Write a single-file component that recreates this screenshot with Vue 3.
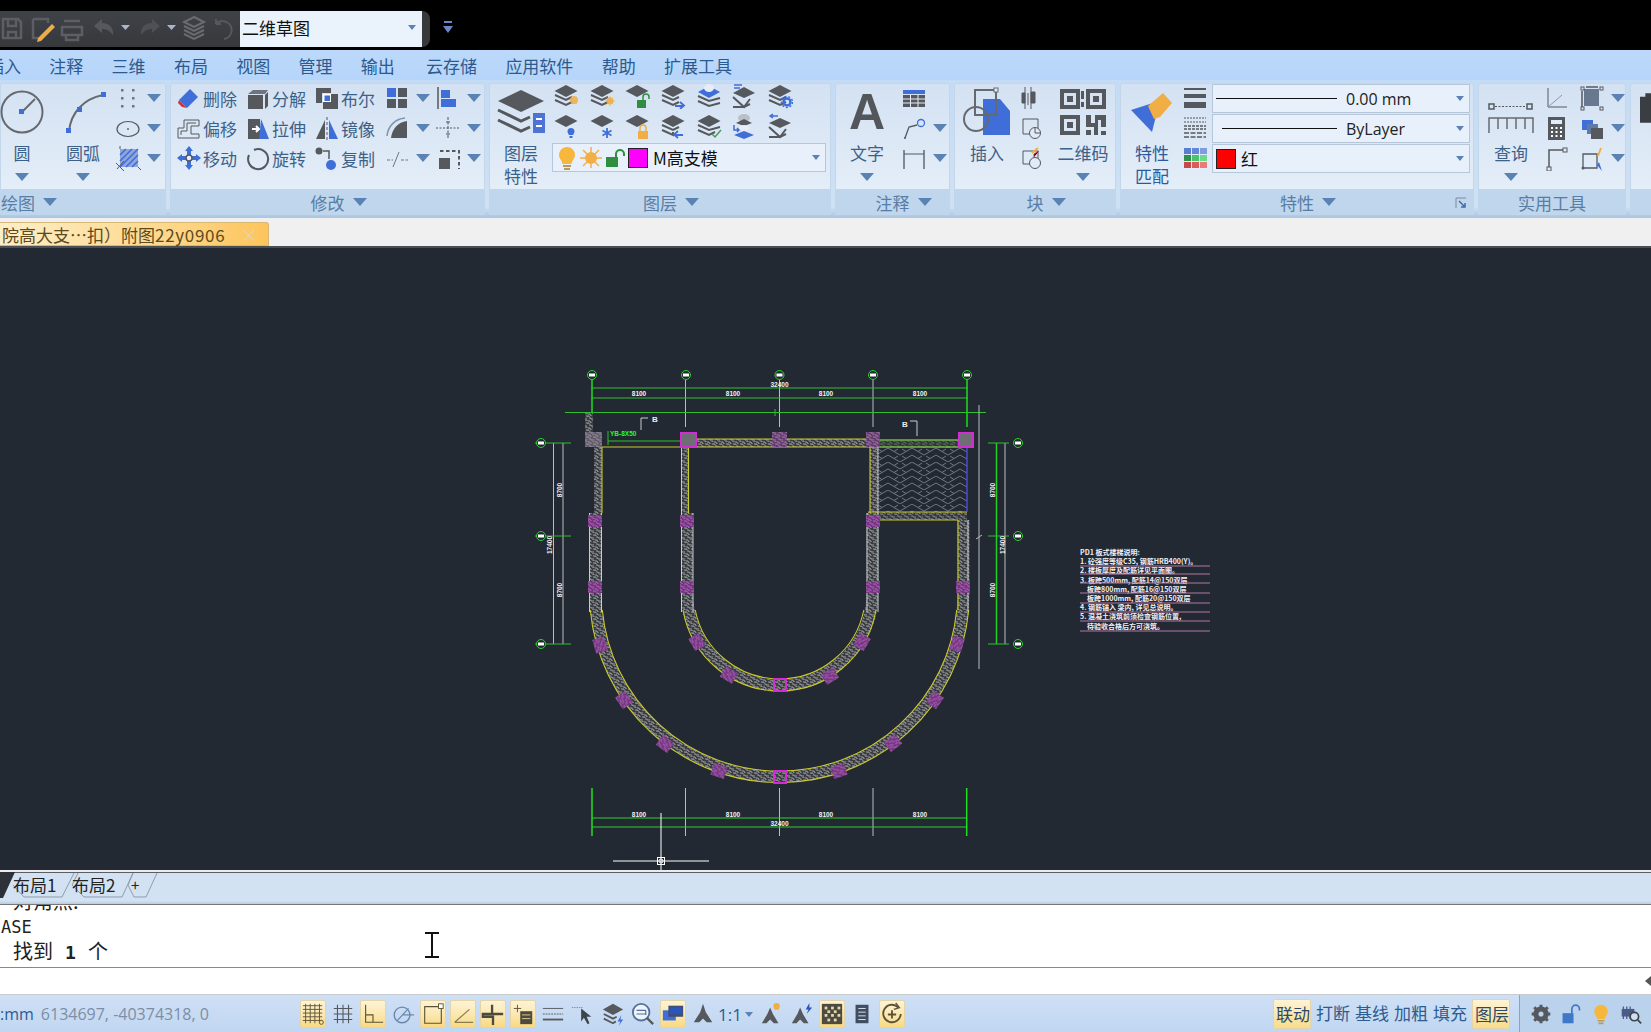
<script setup>
const G = '#55595e'
const B = '#3f6ed8'
const O = '#f0ae45'
const N = '#2f8f3f'

const diamond = `<path d="M13 2 24.500 8 13 14 1.500 8Z" fill="${G}"/>`
const chev = (y, c = G) => `<path d="M2 ${y} 13 ${y + 5} 19 ${y + 2}" fill="none" stroke="${c}" stroke-width="2"/>`
const stack = diamond + chev(12) + chev(17)

const icons = {
  erase: `<path d="M3 15 14 4 22 12 11 23Z" fill="${B}"/><path d="M3 15 9 21 11 23 6 22 2 18Z" fill="#c8373c"/>`,
  explode: `<path d="M3 9 8 5H23L20 9Z" fill="${G}" opacity=".8"/><path d="M3 10H18V24H3Z" fill="${G}"/><path d="M20 10 23 7V21L20 24Z" fill="${G}"/>`,
  boolean: `<path d="M2 3H17V8H8V18H2Z" fill="${G}"/><path d="M9 9H24V24H9Z" fill="${G}"/><path d="M9 9H17V17H9Z" fill="#fff"/><path d="M10.500 10.500H16V16H10.500Z" fill="${B}"/>`,
  offset: `<path d="M2 23V13H8V5H23V11H15V19H23V23Z" fill="none" stroke="${G}" stroke-width="1"/><path d="M5 20V16H11V8H20" fill="none" stroke="${G}" stroke-width="1"/>`,
  stretch: `<path d="M3 4H15V24H3Z" fill="${G}"/><path d="M16 4 24 24H14Z" fill="${B}"/><path d="M7 14H13M11 11 14 14 11 17" fill="none" stroke="#fff" stroke-width="2"/>`,
  mirror: `<path d="M11 5V24H2Z" fill="${G}"/><path d="M15 5V24H24Z" fill="${B}"/><path d="M13 2V26" stroke="${G}" stroke-dasharray="3 2"/>`,
  move: `<path d="M13 1 17 6H15V11H20V9L25 13 20 17V15H15V20H17L13 25 9 20H11V15H6V17L1 13 6 9V11H11V6H9Z" fill="${B}"/><circle cx="13" cy="13" r="3" fill="#e8f0f9" stroke="${G}" stroke-width="1.500"/>`,
  rotate: `<path d="M9 5A10 10 0 1 1 4 10" fill="none" stroke="${G}" stroke-width="2"/>`,
  copy: `<circle cx="5" cy="6" r="3.500" fill="${G}"/><path d="M9 6H15V14" fill="none" stroke="${G}" stroke-width="1.500"/><circle cx="17" cy="20" r="5" fill="${B}"/>`,
  array: `<path d="M3 3H12V12H3Z" fill="${B}"/><path d="M14 3H23V12H14Z" fill="${G}"/><path d="M3 14H12V23H3Z" fill="${G}"/><path d="M14 14H23V23H14Z" fill="${G}"/>`,
  align: `<path d="M3 2V24" stroke="${G}" stroke-width="1.500"/><path d="M6 5H15V13H6Z" fill="${B}"/><path d="M6 14H21V22H6Z" fill="${B}"/>`,
  fillet: `<path d="M7 23C8 14 14 7 23 6V23Z" fill="${G}"/><path d="M3 21C4 11 11 4 21 3" fill="none" stroke="#7e93ad" stroke-width="1.500"/>`,
  trim: `<path d="M1 13H25" stroke="${G}" stroke-dasharray="2 1.500"/><path d="M13 2V24" stroke="${G}" stroke-dasharray="3 1.500"/><path d="M11 7H15M11 19H15" stroke="${G}"/>`,
  breakl: `<path d="M3 15H9M17 15H24" stroke="#6a7686" stroke-dasharray="3 1.500"/><path d="M9 22 15 7" stroke="#6a7686"/>`,
  scale: `<path d="M5 6H24V24" fill="none" stroke="${G}" stroke-width="2" stroke-dasharray="3.500 2.500"/><path d="M4 13H15V24H4Z" fill="${G}"/>`,
  points: `<g fill="#6a7686"><rect x="6" y="4" width="2.500" height="2.500"/><rect x="17" y="4" width="2.500" height="2.500"/><rect x="6" y="12" width="2.500" height="2.500"/><rect x="17" y="12" width="2.500" height="2.500"/><rect x="6" y="20" width="2.500" height="2.500"/><rect x="17" y="20" width="2.500" height="2.500"/></g>`,
  ellipse: `<ellipse cx="13" cy="14" rx="11" ry="7.500" fill="none" stroke="${G}" stroke-width="1.200"/><circle cx="13" cy="14" r=".9" fill="${G}"/>`,
  hatch: `<path d="M5 4H23V22H5Z" fill="#8ea6dc"/><path d="M5 10 11 4M5 16 17 4M5 22 23 4M11 22 23 10M17 22 23 16" stroke="${B}" stroke-width="1.500"/><path d="M1 18 9 26M2 24 9 16M5 1V4M23 22 26 25" stroke="${G}"/>`,

  l1: stack + `<path d="M21 13a4 4 0 0 1 4 4c0 2-1 2.500-1.500 4h-5c-.5-1.500-1.500-2-1.500-4a4 4 0 0 1 4-4Z" fill="${O}" opacity=".85"/>`,
  l2: stack + `<circle cx="21" cy="18" r="3.500" fill="${O}" opacity=".85"/><path d="M21 13V23M16 18H26M17.500 14.500 24.500 21.500M24.500 14.500 17.500 21.500" stroke="${O}" opacity=".8"/>`,
  l3: diamond + `<path d="M13 17H22V25H13Z" fill="${N}"/><path d="M19 17V14A3 3 0 0 1 25 14V16" fill="none" stroke="${N}" stroke-width="1.500"/>`,
  l4: stack + `<path d="M15 23H23M20 19 24 22.500 20 26" fill="none" stroke="${B}" stroke-width="1.800"/>`,
  l5: `<path d="M13 3 24 9 13 15 2 9Z" fill="${B}"/><ellipse cx="13" cy="5" rx="5" ry="4" fill="#e7edf6"/>` + chev(13).replace(' 19 ', ' 24 ') + chev(18).replace(' 19 ', ' 24 '),
  l6: `<path d="M3 2H11M3 5H9" stroke="${B}" stroke-width="1.500"/><path d="M13 4 24 10 13 15 2 10Z" fill="${G}"/>` + chev(14).replace(' 19 ', ' 24 ') + chev(19).replace(' 19 ', ' 24 '),
  l7: stack + `<circle cx="20" cy="19" r="3.500" fill="none" stroke="${B}" stroke-width="2.400"/><circle cx="20" cy="19" r="5.500" fill="none" stroke="${B}" stroke-width="1.400" stroke-dasharray="2 1.800"/>`,
  m1: diamond + `<path d="M18 15a3.500 3.500 0 0 1 3.500 3.500c0 1.500-1 2-1.300 3.500h-4.400c-.3-1.500-1.300-2-1.300-3.500A3.500 3.500 0 0 1 18 15Z" fill="${B}"/><rect x="16.500" y="23" width="3" height="2" fill="${B}"/>`,
  m2: diamond + `<path d="M18 15V25M13.500 17.500 22.500 22.500M22.500 17.500 13.500 22.500" stroke="${B}" stroke-width="1.800"/>`,
  m3: diamond + `<path d="M14 18H24V26H14Z" fill="${O}"/><path d="M16 18V15A3 3 0 0 1 22 15V18" fill="none" stroke="${O}" stroke-width="1.500"/>`,
  m4: diamond + chev(12) + chev(17).replace(' 19 ', ' 13 ') + `<path d="M23 22H15M18 18 14 21.500 18 25" fill="none" stroke="${B}" stroke-width="1.800"/>`,
  m5: diamond + chev(12).replace(' 19 ', ' 24 ') + chev(17) + `<path d="M16 21 19 24 25 17" fill="none" stroke="#4c9a5b" stroke-width="1.500"/>`,
  m6: `<ellipse cx="13" cy="5" rx="6" ry="4" fill="#b9bfc7"/><path d="M13 6 21 10 13 13 5 10Z" fill="${G}"/><ellipse cx="13" cy="15" rx="5" ry="3" fill="#e7edf6"/><path d="M13 18 23 22 13 26 3 22Z" fill="${B}"/><path d="M3 12V17H8M6 15 8 17 6 19" fill="none" stroke="${B}" stroke-width="1.500"/>`,
  m7: `<path d="M4 3H11M6 1 3 3 6 5" fill="none" stroke="${B}" stroke-width="1.500"/><path d="M13 5 24 10 13 15 2 10Z" fill="${G}"/>` + chev(14).replace(' 19 ', ' 24 ') + chev(19).replace(' 19 ', ' 24 '),

  table: `<path d="M2 5H24V9H2Z" fill="${B}"/><path d="M2 10H24V22H2Z" fill="${G}"/><path d="M2 14H24M2 18H24M9.500 10V22M17 10V22" stroke="#e3edf8" stroke-width="1"/>`,
  leader: `<path d="M4 23 8 12 16 10" fill="none" stroke="${G}" stroke-width="1.300"/><circle cx="20" cy="8" r="3.500" fill="none" stroke="${B}" stroke-width="1.300"/><circle cx="4" cy="23" r="1" fill="${G}"/>`,
  dim: `<path d="M3 5V24M23 5V24" stroke="#7d8a99" stroke-width="2"/><path d="M3 9H23" stroke="${G}" stroke-width="1.200"/>`,
  blk1: `<path d="M12 2V24M6 2V24" stroke="${G}"/><path d="M9 8V20M3 8H6V18H3ZM12 7H16V18H12Z" fill="${G}" stroke="${G}"/>`,
  blk2: `<path d="M4 4H19V19H4Z" fill="none" stroke="${G}"/><circle cx="16" cy="18" r="5.500" fill="#e1ebf7" stroke="${G}"/><path d="M16 18V13M16 18H21" stroke="${G}"/>`,
  blk3: `<path d="M4 6H19V19H4Z" fill="none" stroke="${G}"/><circle cx="16" cy="18" r="5.500" fill="#e1ebf7" stroke="${G}"/><path d="M13 8 19 3" stroke="${O}" stroke-width="2"/><path d="M15 12V9L20 6" stroke="#c8373c"/>`,
  lwt: `<path d="M2 3H24V5H2Z" fill="${G}"/><path d="M2 9H24V13H2Z" fill="${G}"/><path d="M2 17H24V23H2Z" fill="${G}"/>`,
  ltype: `<path d="M2 3H24M2 7H24" stroke="${G}" stroke-dasharray="2 1"/><path d="M2 11H24M2 14H24" stroke="${G}" stroke-width="1.300" stroke-dasharray="3 1"/><path d="M2 18H24M2 22H24" stroke="${G}" stroke-width="1.300" stroke-dasharray="5 1.500"/>`,
  colors: `<g><rect x="2" y="3" width="7" height="6" fill="#5b7ed0"/><rect x="10" y="3" width="7" height="6" fill="#6488d8"/><rect x="18" y="3" width="7" height="6" fill="#7f9ce0"/><rect x="2" y="10" width="7" height="6" fill="#2f8f4f"/><rect x="10" y="10" width="7" height="6" fill="#47c46c"/><rect x="18" y="10" width="7" height="6" fill="#6adb8c"/><rect x="2" y="17" width="7" height="6" fill="#c64848"/><rect x="10" y="17" width="7" height="6" fill="#dd5a5a"/><rect x="18" y="17" width="7" height="6" fill="#ea7b7b"/></g>`,
  angle: `<path d="M5 3V22H24" fill="none" stroke="${G}"/><path d="M5 22 19 10" stroke="#8a97a6"/>`,
  calc: `<path d="M5 2H22V25H5Z" fill="${G}"/><path d="M8 5H19V9H8Z" fill="#e3edf8"/><g fill="#fff"><rect x="8" y="12" width="2" height="2"/><rect x="12.500" y="12" width="2" height="2"/><rect x="17" y="12" width="2" height="2"/><rect x="8" y="16" width="2" height="2"/><rect x="12.500" y="16" width="2" height="2"/><rect x="17" y="16" width="2" height="2"/><rect x="8" y="20" width="2" height="2"/><rect x="12.500" y="20" width="2" height="2"/><rect x="17" y="20" width="2" height="2"/></g>`,
  corner: `<path d="M6 25V5H22" fill="none" stroke="${G}" stroke-width="1.500"/><rect x="4" y="22" width="4" height="4" fill="#e1ebf7" stroke="${G}"/><rect x="20" y="3" width="4" height="4" fill="#e1ebf7" stroke="${G}"/>`,
  ucs: `<path d="M5 4H20V21H5Z" fill="#68788e"/><path d="M7 2H19M3 6V22" stroke="${G}" stroke-width="1.500"/><g fill="#e1ebf7" stroke="${G}"><rect x="2" y="2" width="3" height="3"/><rect x="21" y="2" width="3" height="3"/><rect x="2" y="22" width="3" height="3"/><rect x="21" y="22" width="3" height="3"/></g>`,
  copies: `<path d="M3 5H14V15H3Z" fill="${B}"/><path d="M8 9H19V19H8Z" fill="#5d7aa8"/><path d="M12 13H24V24H12Z" fill="${G}"/>`,
  edit: `<path d="M4 9H18V23H4Z" fill="none" stroke="${G}" stroke-width="1.300"/><circle cx="4" cy="23" r="1.500" fill="${G}"/><path d="M18 20 23 26 20 17Z" fill="${B}"/><path d="M22 3 19 11" stroke="${O}" stroke-width="2"/>`,

  s1: `<path d="M2 4H23M2 8H23M2 12H23M2 16H23M2 20H23M5 2V23M10 2V23M15 2V23M20 2V23" stroke="#5c5236" stroke-width="1"/><circle cx="22" cy="22" r="2.200" fill="#f8dd96" stroke="#5c5236"/>`,
  s2: `<path d="M3 7H23M3 13H23M3 19H23M7 3V23M13 3V23M19 3V23" stroke="${G}" stroke-width="1.200"/>`,
  s3: `<path d="M5 3V22H24M5 14H13V22" fill="none" stroke="#5c5236" stroke-width="1.200"/>`,
  s4: `<circle cx="12" cy="14" r="8.500" fill="none" stroke="#6a88ad" stroke-width="1.500"/><path d="M7 20 19 7M12 14H25" stroke="#6a88ad" stroke-width="1.300"/>`,
  s5: `<path d="M4 5H22V23H4Z" fill="none" stroke="#5c5236" stroke-width="1.200"/><rect x="19" y="2" width="5" height="5" fill="#fff" stroke="#5c5236"/>`,
  s6: `<path d="M4 22H24M4 22 20 8" stroke="#8a7c50" stroke-width="1.300"/>`,
  s7: `<path d="M12 3V13H2V16H13V25M12 13H24" fill="none" stroke="#4d4a40" stroke-width="2.500"/>`,
  s8: `<path d="M3 7H11M7 3V11" stroke="#5c5236"/><path d="M10 10H23V24H10Z" fill="#4d4a40"/><path d="M12 14H21M12 18H21" stroke="#e5cf8c"/>`,
  s9: `<path d="M2 7H24" stroke="${G}"/><path d="M2 13H24" stroke="${G}" stroke-dasharray="2 1"/><path d="M2 19H24" stroke="${G}" stroke-width="2"/>`,
  s10: `<path d="M1 6H13" stroke="#7a8796" stroke-dasharray="1.500 1"/><path d="M11 7V21L14 17 18 24 20 23 17 16H22Z" fill="#3e444b"/>`,
  s11: `<path d="M13 2 24 8 13 14 2 8Z" fill="${G}"/><path d="M3 13 13 18 17 16M3 18 13 23 16 21" fill="none" stroke="${G}" stroke-width="2"/><path d="M22 14 18 21H21L19 26 24 19H21Z" fill="${B}"/>`,
  s12: `<circle cx="11" cy="11" r="9" fill="#eef4fb" stroke="#557299" stroke-width="2"/><path d="M6 9H16M6 13H16M16 9V14" stroke="#557299" stroke-width="1.300"/><path d="M17 17 24 24" stroke="${G}" stroke-width="2.500"/>`,
  s13: `<path d="M2 9H16V20H2Z" fill="${B}"/><path d="M8 4H24V16H8Z" fill="#3e4e78"/><path d="M10 6H22V13H10Z" fill="#2c55bb"/>`,
  fig: `<path d="M13 2 16 11 23 22H17L13 18 9 22H3L10 11Z" fill="${G}"/>`,
  fig1: `<path d="M11 6 14 13 20 23H15L11 19 7 23H2L8 13Z" fill="${G}"/><path d="M18 1a3.500 3.500 0 0 1 3.500 3.500c0 2-1 2-1.300 4h-4.400c-.3-2-1.300-2-1.300-4A3.500 3.500 0 0 1 18 1Z" fill="${O}"/>`,
  fig2: `<path d="M11 6 14 13 20 23H15L11 19 7 23H2L8 13Z" fill="${G}"/><path d="M21 1 17 8H20L18 13 24 6H21Z" fill="#2c55bb"/>`,
  s17: `<path d="M2 2H24V24H2Z" fill="#4d4a40"/><g fill="#e5d8ae"><rect x="5" y="5" width="3" height="3"/><rect x="12" y="5" width="3" height="3"/><rect x="19" y="5" width="3" height="3"/><rect x="8" y="9" width="3" height="3"/><rect x="15" y="9" width="3" height="3"/><rect x="5" y="13" width="3" height="3"/><rect x="12" y="13" width="3" height="3"/><rect x="19" y="13" width="3" height="3"/><rect x="8" y="18" width="3" height="3"/><rect x="15" y="18" width="3" height="3"/></g>`,
  s18: `<path d="M6 3H20V23H6Z" fill="#414d61"/><path d="M9 7H17M9 11H17M9 15H17M9 19H17" stroke="#e3edf8"/>`,
  s19: `<path d="M20 6A9.500 9.500 0 1 0 22.500 13" fill="none" stroke="#5c5236" stroke-width="2"/><path d="M17 1 21 6 15 8" fill="none" stroke="#5c5236" stroke-width="1.500"/><path d="M13 9V18M8.500 13.500H17.500" stroke="#5c5236" stroke-width="2"/>`,
  gear: `<circle cx="13" cy="13" r="6.500" fill="none" stroke="${G}" stroke-width="5"/><path d="M13 2V24M2 13H24M5 5 21 21M21 5 5 21" stroke="${G}" stroke-width="3.500"/><circle cx="13" cy="13" r="3" fill="#b9d1ec"/>`,
  lock: `<path d="M3 12H16V24H3Z" fill="#3f78c8"/><path d="M14 12V7A4.500 4.500 0 0 1 23 7V9" fill="none" stroke="#3f78c8" stroke-width="2"/>`,
  bulb: `<path d="M13 2a8 8 0 0 1 8 8c0 4-3 5-3.500 9h-9C8 15 5 14 5 10a8 8 0 0 1 8-8Z" fill="#f6b73c"/><path d="M9 21H17M10 24H16" stroke="#b79a5d" stroke-width="2"/>`,
  hw: `<path d="M2 7H17V16H2Z" fill="#4a5c87"/><path d="M4 4V19M8 4V19M12 4V19" stroke="#4a5c87" stroke-width="1.500"/><circle cx="17" cy="16" r="5" fill="#cfe0f4" stroke="#3e444b" stroke-width="2"/><path d="M21 20 25 24" stroke="#3e444b" stroke-width="2"/>`
}

const menus = ['插入', '注释', '三维', '布局', '视图', '管理', '输出', '云存储', '应用软件', '帮助', '扩展工具']

const modify = [
  { icon: 'erase', label: '删除' }, { icon: 'explode', label: '分解' }, { icon: 'boolean', label: '布尔' }, { icon: 'array', more: true }, { icon: 'align', more: true },
  { icon: 'offset', label: '偏移' }, { icon: 'stretch', label: '拉伸' }, { icon: 'mirror', label: '镜像' }, { icon: 'fillet', more: true }, { icon: 'trim', more: true },
  { icon: 'move', label: '移动' }, { icon: 'rotate', label: '旋转' }, { icon: 'copy', label: '复制' }, { icon: 'breakl', more: true }, { icon: 'scale', more: true }
]

const layerIcons = ['l1', 'l2', 'l3', 'l4', 'l5', 'l6', 'l7', 'm1', 'm2', 'm3', 'm4', 'm5', 'm6', 'm7']

const statusA = ['s1', 's2', 's3', 's4', 's5', 's6', 's7', 's8', 's9', 's10', 's11', 's12', 's13', 'fig']
const statusOn = ['s1', 's3', 's5', 's6', 's7', 's8', 's13', 's17', 's19']
const statusB = ['fig1', 'fig2', 's17', 's18', 's19']
const toggles = [
  { t: '联动', on: true }, { t: '打断' }, { t: '基线' }, { t: '加粗' }, { t: '填充' }, { t: '图层', on: true }
]

// 图纸坐标直接用页面坐标
const axisX = [592, 686, 779.5, 873, 967]
const axisY = [443, 536, 644]
const wallCols = [
  [595, 521], [687, 521], [873, 521], [595, 587], [687, 587], [873, 587], [963, 587],
  [600, 645], [624, 700], [665, 744], [719, 771], [839, 771], [893, 743], [935, 700], [957, 644],
  [697, 642], [729, 675], [830, 676], [862, 642]
]
// 弧上的柱子跟着半径方向转
const colTransform = (c) => {
  if (c[1] < 600) return ''
  const deg = (Math.atan2(779.5 - c[0], c[1] - 593) * 180) / Math.PI
  return `rotate(${deg.toFixed(1)} ${c[0]} ${c[1]})`
}
const notes = [
  'PD1 板式楼梯说明:',
  '1. 砼强度等级C35, 钢筋HRB400(Y)。',
  '2. 楼板厚度及配筋详见平面图。',
  '3. 板跨500mm, 配筋14@150双层',
  '　板跨800mm, 配筋16@150双层',
  '　板跨1000mm, 配筋20@150双层',
  '4. 钢筋锚入 梁内, 详见总说明。',
  '5. 混凝土浇筑前须检查钢筋位置,',
  '　待验收合格后方可浇筑。'
]
const noteLines = [566, 574, 583, 593, 603, 612, 621, 631]
</script>

<template>
  <div class="app">
    <div class="title-bar">
      <div class="qat">
        <svg width="240" height="36" viewBox="0 0 240 36">
          <g fill="none" stroke="#5b5e63" stroke-width="2.500">
            <path d="M3 8H18L21 11V27H3Z" />
            <path d="M8 8V15H16V8M8 27V21H16V27" />
            <path d="M33 8H48V12M33 8V27H38" />
            <path d="M64 10H80M62 16H82V24H62ZM66 24V29H78V24" />
          </g>
          <path d="M38 27 52 13 55 16 41 30 37 31Z" fill="#e8ad4c" />
          <g fill="#55585d">
            <path d="M94 15 102 8V12C110 12 114 18 113 24 110 20 107 18 102 18V22Z" />
            <path d="M160 15 152 8V12C144 12 140 18 141 24 144 20 147 18 152 18V22Z" opacity=".7" />
          </g>
          <path d="M121 14H130L125.500 19ZM167 14H176L171.500 19Z" fill="#a9b5c8" />
          <g fill="none" stroke="#6a6c70" stroke-width="2">
            <path d="M194 6 204 11 194 16 184 11ZM184 15 194 20 204 15M184 19 194 24 204 19M184 23 194 28 204 23" />
          </g>
          <path d="M216 13A9 9 0 1 1 224 28M216 13V8M216 13H221" fill="none" stroke="#55585d" stroke-width="2" />
        </svg>
      </div>
      <div class="workspace">
        <span>二维草图</span>
        <i class="arr tiny"></i>
      </div>
      <div class="qat-cap"></div>
      <svg class="qat-more" width="12" height="14" viewBox="0 0 12 14">
        <path d="M2 2H10" stroke="#6c86c8" stroke-width="2" />
        <path d="M1 6H11L6 13Z" fill="#6c86c8" />
      </svg>
    </div>

    <div class="menu-bar">
      <span v-for="m in menus" :key="m" :class="{ wide: m === '云存储' }">{{ m }}</span>
    </div>

    <div class="ribbon">
      <section class="panel draw">
        <div class="body">
          <div class="big w44">
            <div class="big-ico">
              <svg width="44" height="44" viewBox="0 0 44 44">
                <circle cx="22" cy="22" r="20.500" fill="none" stroke="#666a6f" stroke-width="2" />
                <path d="M22 22 35 9" stroke="#666a6f" stroke-width="2" />
                <rect x="19" y="19" width="5" height="5" fill="#3f6ed8" />
              </svg>
            </div>
            <div class="lbl">圆</div>
            <i class="arr"></i>
          </div>
          <div class="big w52">
            <div class="big-ico">
              <svg width="52" height="50" viewBox="0 0 52 50">
                <path d="M12 44C14 26 26 12 46 8" fill="none" stroke="#666a6f" stroke-width="2" />
                <rect x="9" y="41" width="5" height="5" fill="#3f6ed8" />
                <rect x="20" y="20" width="5" height="5" fill="#3f6ed8" />
                <rect x="44" y="5" width="5" height="5" fill="#3f6ed8" />
              </svg>
            </div>
            <div class="lbl">圆弧</div>
            <i class="arr"></i>
          </div>
          <div class="stack">
            <div class="row"><svg class="ico" viewBox="0 0 26 26" v-html="icons.points"></svg><i class="arr"></i></div>
            <div class="row"><svg class="ico" viewBox="0 0 26 26" v-html="icons.ellipse"></svg><i class="arr"></i></div>
            <div class="row"><svg class="ico" viewBox="0 0 26 26" v-html="icons.hatch"></svg><i class="arr"></i></div>
          </div>
        </div>
        <div class="foot flush"><span>绘图</span><i class="arr"></i></div>
      </section>

      <section class="panel modify">
        <div class="body">
          <div class="modify-grid">
            <div v-for="(t, i) in modify" :key="i" class="row">
              <svg class="ico" viewBox="0 0 26 26" v-html="icons[t.icon]"></svg>
              <span v-if="t.label" class="tool-text">{{ t.label }}</span>
              <i v-if="t.more" class="arr"></i>
            </div>
          </div>
        </div>
        <div class="foot"><span>修改</span><i class="arr"></i></div>
      </section>

      <section class="panel layer">
        <div class="body">
          <div class="big w48">
            <div class="big-ico">
              <svg width="48" height="46" viewBox="0 0 48 46">
                <path d="M24 1 47 12 24 23 1 12Z" fill="#55595e" />
                <path d="M1 21 24 32 33 28M1 31 24 42 33 38" fill="none" stroke="#55595e" stroke-width="3" />
                <path d="M36 24H48V44H36Z" fill="#4d74d4" />
                <path d="M39 30H45M39 37H45" stroke="#fff" stroke-width="2" />
              </svg>
            </div>
            <div class="lbl">图层</div>
            <div class="lbl">特性</div>
          </div>
          <div class="layer-side">
            <div class="layer-icons">
              <svg v-for="n in layerIcons" :key="n" class="ico" viewBox="0 0 26 26" v-html="icons[n]"></svg>
            </div>
            <div class="combo layer-combo">
              <svg width="20" height="24" viewBox="0 0 20 24">
                <path d="M10 1a8 8 0 0 1 8 8c0 4-3 5-3.500 9h-9C5 14 2 13 2 9a8 8 0 0 1 8-8Z" fill="#f6b73c" />
                <path d="M6 20H14M7 23H13" stroke="#b79a5d" stroke-width="2" />
              </svg>
              <svg width="22" height="22" viewBox="0 0 22 22">
                <circle cx="11" cy="11" r="6" fill="#f3ae45" />
                <path d="M11 0V21M0 11H22M3 3 19 19M19 3 3 19" stroke="#f3ae45" stroke-width="1.500" />
              </svg>
              <svg width="20" height="20" viewBox="0 0 20 20">
                <path d="M1 9H13V19H1Z" fill="#2f8f3f" />
                <path d="M11 9V6A4 4 0 0 1 19 6V8" fill="none" stroke="#2f8f3f" stroke-width="2" />
              </svg>
              <b class="swatch magenta"></b>
              <span class="combo-text">M高支模</span>
              <i class="arr tiny"></i>
            </div>
          </div>
        </div>
        <div class="foot"><span>图层</span><i class="arr"></i></div>
      </section>

      <section class="panel annot">
        <div class="body">
          <div class="big w52">
            <div class="big-ico"><span class="big-a">A</span></div>
            <div class="lbl">文字</div>
            <i class="arr"></i>
          </div>
          <div class="stack">
            <div class="row"><svg class="ico" viewBox="0 0 26 26" v-html="icons.table"></svg></div>
            <div class="row"><svg class="ico" viewBox="0 0 26 26" v-html="icons.leader"></svg><i class="arr"></i></div>
            <div class="row"><svg class="ico" viewBox="0 0 26 26" v-html="icons.dim"></svg><i class="arr"></i></div>
          </div>
        </div>
        <div class="foot"><span>注释</span><i class="arr"></i></div>
      </section>

      <section class="panel block">
        <div class="body">
          <div class="big w50">
            <div class="big-ico">
              <svg width="50" height="50" viewBox="0 0 50 50">
                <path d="M21 12H38L48 24V48H21Z" fill="#3f6ed8" />
                <circle cx="14" cy="32" r="12" fill="none" stroke="#666a6f" stroke-width="2" />
                <path d="M13 3H34V28H13Z" fill="none" stroke="#666a6f" stroke-width="2" />
                <rect x="32" y="1" width="4" height="4" fill="#e1ebf7" stroke="#666a6f" />
              </svg>
            </div>
            <div class="lbl">插入</div>
          </div>
          <div class="stack">
            <div class="row"><svg class="ico" viewBox="0 0 26 26" v-html="icons.blk1"></svg></div>
            <div class="row"><svg class="ico" viewBox="0 0 26 26" v-html="icons.blk2"></svg></div>
            <div class="row"><svg class="ico" viewBox="0 0 26 26" v-html="icons.blk3"></svg></div>
          </div>
          <div class="big w60">
            <div class="big-ico">
              <svg width="46" height="46" viewBox="0 0 46 46" fill="#55595e">
                <path d="M0 0H20V20H0ZM4 4V16H16V4Z" fill-rule="evenodd" />
                <rect x="7" y="7" width="6" height="6" />
                <path d="M26 0H46V20H26ZM30 4V16H42V4Z" fill-rule="evenodd" />
                <rect x="33" y="7" width="6" height="6" />
                <path d="M0 26H20V46H0ZM4 30V42H16V30Z" fill-rule="evenodd" />
                <rect x="7" y="33" width="6" height="6" />
                <path d="M26 26H31V34H35V26H46V38H41V31H38V46H34V38H26ZM26 41H31V46H26ZM41 42H46V46H41ZM21 2H24V10H21ZM21 13H24V18H21Z" />
              </svg>
            </div>
            <div class="lbl">二维码</div>
            <i class="arr"></i>
          </div>
        </div>
        <div class="foot"><span>块</span><i class="arr"></i></div>
      </section>

      <section class="panel prop">
        <div class="body">
          <div class="big w48 brush">
            <div class="big-ico">
              <svg width="44" height="40" viewBox="0 0 44 40">
                <path d="M1 18 26 10 29 12 22 40Z" fill="#3f6ed8" />
                <path d="M18 14 33 1 42 11 30 25 24 27Z" fill="#f0ae45" />
              </svg>
            </div>
            <div class="lbl blue">特性</div>
            <div class="lbl blue">匹配</div>
          </div>
          <div class="stack narrow">
            <div class="row"><svg class="ico" viewBox="0 0 26 26" v-html="icons.lwt"></svg></div>
            <div class="row"><svg class="ico" viewBox="0 0 26 26" v-html="icons.ltype"></svg></div>
            <div class="row"><svg class="ico" viewBox="0 0 26 26" v-html="icons.colors"></svg></div>
          </div>
          <div class="prop-combos">
            <div class="combo prop-combo"><b class="sample"></b><span class="prop-val">0.00 mm</span><i class="arr tiny"></i></div>
            <div class="combo prop-combo"><b class="sample short"></b><span class="prop-val">ByLayer</span><i class="arr tiny"></i></div>
            <div class="combo prop-combo"><b class="swatch red"></b><span class="red-text">红</span><i class="arr tiny"></i></div>
          </div>
        </div>
        <div class="foot">
          <span>特性</span><i class="arr"></i>
          <svg class="launcher" width="12" height="12" viewBox="0 0 12 12">
            <path d="M1 11V1H11" fill="none" stroke="#7d8a99" />
            <path d="M4 4 10 10M10 6V10H6" fill="none" stroke="#3f6ea8" stroke-width="1.500" />
          </svg>
        </div>
      </section>

      <section class="panel util">
        <div class="body">
          <div class="big w50">
            <div class="big-ico low">
              <svg width="48" height="32" viewBox="0 0 48 32">
                <rect x="2" y="2" width="5" height="5" fill="none" stroke="#55595e" stroke-width="1.500" />
                <rect x="40" y="2" width="5" height="5" fill="none" stroke="#55595e" stroke-width="1.500" />
                <path d="M8 4.500H39" stroke="#55595e" stroke-dasharray="2 1.500" />
                <path d="M2 31V16H46V31M11 16V27M20 16V27M29 16V27M38 16V27" fill="none" stroke="#666a6f" stroke-width="1.500" />
              </svg>
            </div>
            <div class="lbl">查询</div>
            <i class="arr"></i>
          </div>
          <div class="stack">
            <div class="row"><svg class="ico" viewBox="0 0 26 26" v-html="icons.angle"></svg></div>
            <div class="row"><svg class="ico" viewBox="0 0 26 26" v-html="icons.calc"></svg></div>
            <div class="row"><svg class="ico" viewBox="0 0 26 26" v-html="icons.corner"></svg></div>
          </div>
          <div class="stack">
            <div class="row"><svg class="ico" viewBox="0 0 26 26" v-html="icons.ucs"></svg><i class="arr"></i></div>
            <div class="row"><svg class="ico" viewBox="0 0 26 26" v-html="icons.copies"></svg><i class="arr"></i></div>
            <div class="row"><svg class="ico" viewBox="0 0 26 26" v-html="icons.edit"></svg><i class="arr"></i></div>
          </div>
        </div>
        <div class="foot flat"><span>实用工具</span></div>
      </section>

      <section class="panel clip">
        <div class="body">
          <svg class="clip-ico" width="30" height="44" viewBox="0 0 30 44">
            <path d="M0 5H30V44H0Z" fill="#3a3d42" />
            <path d="M8 0H22V8H8Z" fill="#3a3d42" />
          </svg>
        </div>
        <div class="foot flat"></div>
      </section>
    </div>

    <div class="doc-bar">
      <div class="doc-tab">
        <span>院高大支⋯扣）附图<span class="doc-no">22y0906</span></span>
        <em>×</em>
      </div>
    </div>

    <div class="canvas">
      <svg class="drawing" width="1651" height="622" viewBox="0 248 1651 622">
        <defs>
          <pattern id="noise" width="7" height="7" patternUnits="userSpaceOnUse">
            <rect width="7" height="7" fill="#3a3e44" />
            <path d="M0 1H2V2H3V3M4 0H6V1M5 3H7V4M1 5H3V6H4M5 5V7M0 3H1V4" stroke="#9c9d9e" stroke-width="1" fill="none" />
          </pattern>
          <pattern id="herring" width="24" height="14" patternUnits="userSpaceOnUse">
            <path d="M0 0 12 7 24 0M0 7 12 14 24 7M6 3.500 10 1M18 3.500 14 1M6 10.500 10 8M18 10.500 14 8" fill="none" stroke="#6f7880" stroke-width="1" />
          </pattern>
        </defs>

        <!-- 轴网 -->
        <path d="M685.500 380V427M779.500 372V427M873 380V427" stroke="#b9bdc1" stroke-width="1" />
        <path d="M592 378V427M967 378V427" stroke="#19e019" stroke-width="1.500" />
        <path d="M591 388H968M591 398H968M565 412.500H986" stroke="#2fbf2f" stroke-width="1.200" />
        <path d="M775 409V416" stroke="#2fbf2f" />
        <g v-for="x in axisX" :key="'a' + x">
          <circle :cx="x" cy="375" r="4.500" fill="#222932" stroke="#2fd02f" />
          <rect :x="x - 3" y="373.500" width="6" height="3" fill="#fff" />
        </g>
        <g class="tiny-text">
          <text x="639" y="396">8100</text>
          <text x="733" y="396">8100</text>
          <text x="826" y="396">8100</text>
          <text x="920" y="396">8100</text>
          <text x="779.500" y="387" class="mid">32400</text>
        </g>

        <!-- 左右尺寸 -->
        <path d="M553.500 443V644M563 443V644" stroke="#b9bdc1" />
        <path d="M996.500 443V644" stroke="#22d022" stroke-width="1.500" />
        <path d="M1005 443V644M979 405V669" stroke="#b9bdc1" />
        <path d="M976 539 982 535" stroke="#b9bdc1" />
        <path v-for="y in axisY" :key="'h' + y" :d="`M535 ${y}H571M988 ${y}H1009`" stroke="#2fbf2f" />
        <g v-for="y in axisY" :key="'b' + y">
          <circle cx="541" :cy="y" r="4.500" fill="#222932" stroke="#2fd02f" />
          <rect x="538" :y="y - 1.500" width="6" height="3" fill="#fff" />
          <circle cx="1018" :cy="y" r="4.500" fill="#222932" stroke="#2fd02f" />
          <rect x="1015" :y="y - 1.500" width="6" height="3" fill="#fff" />
        </g>
        <g class="tiny-text">
          <text transform="translate(562,490) rotate(-90)">8700</text>
          <text transform="translate(562,590) rotate(-90)">8700</text>
          <text transform="translate(552,545) rotate(-90)">17400</text>
          <text transform="translate(995,490) rotate(-90)">8700</text>
          <text transform="translate(995,590) rotate(-90)">8700</text>
          <text transform="translate(1005,545) rotate(-90)">17400</text>
        </g>

        <!-- 左上立柱与剖切符号 -->
        <rect x="585" y="413" width="8" height="34" fill="url(#noise)" />
        <path d="M641 430V418H648" fill="none" stroke="#c8cbce" />
        <path d="M910 421H917V436" fill="none" stroke="#c8cbce" />
        <text x="652" y="422" class="sec">B</text>
        <text x="902" y="427" class="sec">B</text>
        <path d="M608 431V445M608 441H681" stroke="#2fbf2f" />
        <text x="610" y="436" class="green-text">YB-8X50</text>

        <!-- 梁和弧墙 -->
        <rect x="681" y="439" width="197" height="8" fill="url(#noise)" />
        <rect x="878" y="440" width="89" height="7" fill="url(#noise)" opacity=".55" />
        <rect x="878" y="447" width="89" height="65" fill="url(#herring)" />
        <rect x="868" y="512" width="99" height="8" fill="url(#noise)" opacity=".8" />
        <rect x="594" y="447" width="8" height="66" fill="url(#noise)" />
        <rect x="681.500" y="447" width="7" height="66" fill="url(#noise)" />
        <rect x="870" y="447" width="8" height="66" fill="url(#noise)" />
        <path d="M595.500 513V593A184 184 0 0 0 963.500 593V520" fill="none" stroke="url(#noise)" stroke-width="12" />
        <path d="M687 513V593A92.500 92.500 0 0 0 872.500 593V513" fill="none" stroke="url(#noise)" stroke-width="12" />

        <g fill="none" stroke="#c9c92b" stroke-width="1.100">
          <path d="M590.300 610A190 190 0 0 0 968.700 610" />
          <path d="M602.300 610A178 178 0 0 0 956.700 610" />
          <path d="M683 610A98 98 0 0 0 876 610" />
          <path d="M695.200 610A86 86 0 0 0 863.800 610" />
          <path d="M600 447H968M681 439H878M878 440H967" />
          <path d="M868 512H967M878 520H958" />
          <path d="M602 447V513M688.500 447V513M870 447V513M958 520V610" />
        </g>
        <path d="M589.500 513V612M601.500 513V612M681.500 447V612M693 513V612M867 513V612M878 447V612M968 520V612" fill="none" stroke="#c8ccd0" />
        <path d="M878 440H958M878 447H958" stroke="#46b046" />
        <path d="M967 447V512" stroke="#4848d8" stroke-width="1.500" />

        <!-- 柱 -->
        <rect x="585" y="432" width="17" height="15" fill="url(#noise)" />
        <rect x="585" y="432" width="17" height="15" fill="#8a7a92" opacity=".5" />
        <g>
          <rect x="772" y="432" width="15" height="15" fill="url(#noise)" />
          <rect x="772" y="432" width="15" height="15" fill="#a03cae" opacity=".4" />
          <rect x="866" y="432" width="14" height="15" fill="url(#noise)" />
          <rect x="866" y="432" width="14" height="15" fill="#a03cae" opacity=".4" />
        </g>
        <g fill="#6e6f74" stroke="#d22cd2" stroke-width="2">
          <rect x="681" y="433" width="15" height="14" />
          <rect x="959" y="433" width="14" height="14" />
          <rect x="774" y="679" width="12" height="12" fill="url(#noise)" />
          <rect x="774" y="771" width="12" height="12" fill="url(#noise)" />
        </g>
        <g v-for="c in wallCols" :key="c.join()" :transform="colTransform(c)">
          <rect :x="c[0] - 7" :y="c[1] - 6" width="14" height="12" fill="url(#noise)" />
          <rect :x="c[0] - 7" :y="c[1] - 6" width="14" height="12" fill="#b02cc0" opacity=".5" />
        </g>

        <!-- 下方尺寸 -->
        <path d="M592 788V836M966.700 788V836" stroke="#1fe01f" stroke-width="1.500" />
        <path d="M685.500 788V836M779.500 788V836M873 788V836" stroke="#b9bdc1" />
        <path d="M592 818H967M592 827H967" stroke="#2fd02f" stroke-width="1.200" />
        <g class="tiny-text">
          <text x="639" y="817">8100</text>
          <text x="733" y="817">8100</text>
          <text x="826" y="817">8100</text>
          <text x="920" y="817">8100</text>
          <text x="779.500" y="826" class="mid">32400</text>
        </g>

        <!-- 说明 -->
        <g class="note">
          <text v-for="(t, i) in notes" :key="i" x="1080" :y="555 + i * 9.200">{{ t }}</text>
        </g>
        <path v-for="y in noteLines" :key="'n' + y" :d="`M1080 ${y}H1210`" stroke="#b478a8" />

        <!-- 十字光标 -->
        <path d="M613 861H709M661 813V870" stroke="#fff" />
        <rect x="657.500" y="857.500" width="7" height="7" fill="none" stroke="#fff" />
        <circle cx="661" cy="861" r="2" fill="none" stroke="#fff" />
      </svg>
    </div>

    <div class="layout-bar">
      <svg class="layout-shape" width="170" height="33" viewBox="0 0 170 33">
        <path d="M0 0H15L3 26H0Z" fill="#2d3036" />
        <path d="M74 1 62 25H24L13 13" fill="none" stroke="#8f9dae" />
        <path d="M133 1 122 25H84L72 13 78 1" fill="none" stroke="#8f9dae" />
        <path d="M157 1 146 25H134L128 13 133 1" fill="none" stroke="#8f9dae" />
      </svg>
      <span class="lt first">布局1</span>
      <span class="lt">布局2</span>
      <span class="lt plus">+</span>
    </div>

    <div class="cmd">
      <div class="cmd-line cut">对角点:</div>
      <div class="cmd-line ase">ASE</div>
      <div class="cmd-line found"><span>找到</span> <b>1</b> <span>个</span></div>
      <svg class="ibeam" width="16" height="26" viewBox="0 0 16 26">
        <path d="M1 1H15M1 25H15M8 1V25" fill="none" stroke="#111" stroke-width="2" />
      </svg>
    </div>
    <div class="cmd-input">
      <i class="cmd-scroll"></i>
    </div>

    <div class="status">
      <div class="coords"><span class="unit">:mm</span><span class="xyz">6134697, -40374318, 0</span></div>
      <div v-for="n in statusA" :key="n" class="cell" :class="{ on: statusOn.includes(n) }">
        <svg class="ico" viewBox="0 0 26 26" v-html="icons[n]"></svg>
      </div>
      <div class="scale"><span>1:1</span><i class="arr tiny"></i></div>
      <div v-for="n in statusB" :key="n" class="cell" :class="{ on: statusOn.includes(n) }">
        <svg class="ico" viewBox="0 0 26 26" v-html="icons[n]"></svg>
      </div>
      <div class="toggles">
        <span v-for="t in toggles" :key="t.t" :class="{ on: t.on }">{{ t.t }}</span>
      </div>
      <div class="tray">
        <svg class="ico" viewBox="0 0 26 26" v-html="icons.gear"></svg>
        <svg class="ico" viewBox="0 0 26 26" v-html="icons.lock"></svg>
        <svg class="ico" viewBox="0 0 26 26" v-html="icons.bulb"></svg>
        <svg class="ico" viewBox="0 0 26 26" v-html="icons.hw"></svg>
      </div>
    </div>
  </div>
</template>

<style>
html,
body {
  margin: 0;
  background: #000;
  overflow: hidden;
}
</style>

<style scoped>
.app {
  width: 1651px;
  height: 1032px;
  display: flex;
  flex-direction: column;
  overflow: hidden;
  font-family: "Noto Sans CJK SC", "Noto Sans", sans-serif;
  font-size: 17px;
  color: #3c6189;
}

.title-bar {
  height: 50px;
  flex: none;
  background: #000;
  display: flex;
  align-items: flex-start;
  padding-top: 11px;
  box-sizing: border-box;
}

.qat {
  width: 240px;
  height: 36px;
  background: linear-gradient(#3f4247, #36383c);
}

.qat svg {
  display: block;
}

.workspace {
  width: 182px;
  height: 36px;
  box-sizing: border-box;
  padding: 0 6px 4px 2px;
  background: #eaf2fb;
  color: #111;
  display: flex;
  align-items: center;
  justify-content: space-between;
}

.qat-cap {
  width: 8px;
  height: 36px;
  background: #36383c;
  border-radius: 0 8px 8px 0;
}

.qat-more {
  margin: 9px 0 0 12px;
}

.menu-bar {
  height: 30px;
  flex: none;
  background: linear-gradient(#bcd9fb, #b6d5fa);
  display: flex;
  align-items: center;
  gap: 28.300px;
  margin-left: -13px;
  color: #2c5a8f;
  width: 1680px;
}

.menu-bar .wide {
  margin-left: 3px;
}

.ribbon {
  height: 138px;
  flex: none;
  display: flex;
  gap: 4px;
  padding-top: 3px;
  box-sizing: border-box;
  background: linear-gradient(#c3dbf5, #cfe1f4 92%, #a9c5de);
}

.panel {
  height: 132px;
  flex: none;
  display: flex;
  flex-direction: column;
  border-radius: 3px;
  overflow: hidden;
  box-sizing: border-box;
  box-shadow: 0 0 0 1px #c4d6ea inset;
  background: linear-gradient(#d3e1f2, #e8f1fa);
}

.body {
  height: 106px;
  flex: none;
  display: flex;
}

.foot {
  flex: 1;
  display: flex;
  align-items: center;
  justify-content: center;
  gap: 8px;
  padding-left: 22px;
  background: #bfd6ec;
  color: #587da6;
  position: relative;
}

.foot.flush {
  justify-content: flex-start;
  padding-left: 1px;
}

.foot.flat {
  padding-left: 0;
}

.launcher {
  position: absolute;
  right: 7px;
  top: 8px;
}

.draw {
  width: 166px;
}

.modify {
  width: 315px;
}

.layer {
  width: 342px;
}

.annot {
  width: 115px;
}

.block {
  width: 162px;
}

.prop {
  width: 354px;
}

.util {
  width: 148px;
}

.clip {
  width: 30px;
}

.clip-ico {
  margin: 3px 0 0 10px;
}

.big {
  display: flex;
  flex-direction: column;
  align-items: center;
  flex: none;
}

.big-ico {
  height: 58px;
  display: flex;
  align-items: center;
  justify-content: center;
}

.big-ico.low {
  padding-top: 12px;
  box-sizing: border-box;
}

.w44 {
  width: 44px;
}

.w48 {
  width: 48px;
}

.w50 {
  width: 50px;
}

.w52 {
  width: 52px;
}

.w60 {
  width: 60px;
}

.lbl {
  height: 23px;
  line-height: 23px;
  white-space: nowrap;
}

.lbl.blue {
  color: #2c5a9f;
}

.arr {
  display: inline-block;
  flex: none;
  width: 0;
  height: 0;
  border-left: 7px solid transparent;
  border-right: 7px solid transparent;
  border-top: 8px solid #5a82b5;
}

.arr.tiny {
  border-left-width: 4px;
  border-right-width: 4px;
  border-top-width: 5px;
}

.big > .arr {
  margin-top: 9px;
}

.ico {
  width: 26px;
  height: 26px;
  flex: none;
}

.stack {
  display: grid;
  grid-auto-rows: 30px;
  flex: none;
}

.row {
  display: flex;
  align-items: center;
  gap: 6px;
}

.draw .w52 {
  margin-left: 13px;
}

.draw .stack {
  margin-left: 6px;
}

.modify-grid {
  display: grid;
  grid-template-columns: 69px 69px 70px 51px 51px;
  grid-auto-rows: 30px;
  padding-left: 6px;
}

.modify-grid .row {
  gap: 1px;
}

.modify-grid .row .arr {
  margin-left: 5px;
}

.tool-text {
  color: #3c6189;
  white-space: nowrap;
}

.layer .w48 {
  margin-left: 8px;
}

.layer-side {
  margin-left: 7px;
  width: 274px;
}

.layer-icons {
  display: grid;
  grid-template-columns: repeat(7, 26px);
  column-gap: 9.700px;
  grid-auto-rows: 30px;
  height: 60px;
  padding-left: 1px;
}

.combo {
  display: flex;
  align-items: center;
  box-sizing: border-box;
  background: #e8f1fb;
  border: 1px solid #b7c7da;
  color: #111;
  position: relative;
}

.combo > .arr {
  position: absolute;
  right: 5px;
  top: 11px;
}

.layer-combo {
  height: 29px;
  gap: 3px;
  padding-left: 4px;
}

.swatch {
  width: 20px;
  height: 20px;
  box-sizing: border-box;
  border: 1px solid #222;
  flex: none;
}

.magenta {
  background: #f0f;
}

.red {
  background: #f00;
  margin-left: 3px;
}

.combo-text {
  margin-left: 2px;
}

.annot .big {
  margin-left: 6px;
}

.big-a {
  font-family: "Liberation Sans", sans-serif;
  font-weight: 700;
  font-size: 50px;
  line-height: 44px;
  color: #53575c;
}

.annot .stack {
  margin-left: 8px;
}

.block .big:first-child {
  margin-left: 8px;
}

.block .stack {
  margin-left: 7px;
}

.block .w60 {
  margin-left: 8px;
}

.brush {
  margin-left: 8px;
}

.narrow {
  margin-left: 6px;
}

.prop-combos {
  margin-left: 4px;
  width: 258px;
}

.prop-combo {
  height: 29px;
  margin-top: 1px;
}

.sample {
  width: 121px;
  height: 1px;
  background: #111;
  margin-left: 3px;
}

.sample.short {
  width: 115px;
  margin-left: 9px;
}

.prop-val {
  margin-left: 9px;
  font-family: "Open Sans", sans-serif;
  font-size: 16px;
  color: #222;
}

.red-text {
  margin-left: 5px;
}

.util .w50 {
  margin-left: 8px;
}

.util .stack:nth-child(2) {
  margin-left: 7px;
}

.util .stack:nth-child(3) {
  margin-left: 10px;
}

.doc-bar {
  height: 30px;
  flex: none;
  background: #f0f0f0;
  border-bottom: 2px solid #4a4d52;
  box-sizing: border-box;
  padding-top: 4px;
}

.doc-tab {
  width: 269px;
  height: 24px;
  box-sizing: border-box;
  border-radius: 0 3px 0 0;
  border: 1px solid #d9b877;
  border-left: 0;
  background: linear-gradient(90deg, #fdeec8, #fdd98e 60%, #fdc45c);
  color: #5c4a1c;
  font-family: "Noto Sans CJK SC", "Liberation Serif", serif;
  display: flex;
  align-items: center;
  justify-content: space-between;
  padding: 0 10px 0 2px;
  white-space: nowrap;
}

.doc-no {
  letter-spacing: .7px;
}

.doc-tab em {
  font-style: normal;
  color: #e8d3a4;
}

.canvas {
  height: 622px;
  flex: none;
  background: #222932;
}

.drawing {
  display: block;
}

.tiny-text text {
  font-family: "Liberation Sans", sans-serif;
  font-size: 6.500px;
  font-weight: 700;
  fill: #f2f2f2;
  text-anchor: middle;
}

.sec {
  font-family: "Liberation Sans", sans-serif;
  font-size: 8px;
  font-weight: 700;
  fill: #eee;
}

.green-text {
  font-family: "Liberation Sans", sans-serif;
  font-size: 6.500px;
  font-weight: 700;
  fill: #25ff25;
}

.note text {
  font-family: "Noto Sans CJK SC", sans-serif;
  font-size: 7px;
  font-weight: 700;
  fill: #f4eef4;
}

.layout-bar {
  height: 35px;
  flex: none;
  box-sizing: border-box;
  border-top: 2px solid #e9ebee;
  background: linear-gradient(#5a5f66 1px, #d2e2f2 1px, #d2e2f2 90%, #b7cbe2);
  display: flex;
  align-items: center;
  padding-bottom: 8px;
  position: relative;
  color: #222;
  border-bottom: 1px solid #777;
}

.layout-shape {
  position: absolute;
  left: 0;
  top: 0;
}

.lt {
  position: relative;
  width: 59px;
  white-space: nowrap;
}

.lt.first {
  margin-left: 13px;
}

.lt.plus {
  font-size: 15px;
}

.cmd {
  height: 63px;
  flex: none;
  background: #fff;
  border-bottom: 1px solid #888;
  box-sizing: border-box;
  overflow: hidden;
  position: relative;
  color: #222;
}

.cmd-line {
  height: 25px;
  line-height: 25px;
  white-space: nowrap;
}

.cut {
  margin-top: -17px;
  padding-left: 13px;
  margin-bottom: 2px;
  font-size: 20px;
}

.ase {
  font-family: "DejaVu Sans Mono", monospace;
  padding-left: 1px;
  font-size: 17px;
}

.found {
  padding-left: 13px;
  font-family: "DejaVu Sans Mono", "Noto Sans CJK SC", monospace;
  font-size: 20px;
}

.found b {
  font-size: 18px;
}

.ibeam {
  position: absolute;
  left: 424px;
  top: 27px;
}

.cmd-input {
  height: 26px;
  flex: none;
  background: #fff;
  border-bottom: 1px solid #c8cbd0;
  position: relative;
}

.cmd-scroll {
  position: absolute;
  right: 0;
  top: 8px;
  width: 0;
  height: 0;
  border-top: 5px solid transparent;
  border-bottom: 5px solid transparent;
  border-right: 6px solid #555;
}

.status {
  height: 38px;
  flex: none;
  display: flex;
  align-items: center;
  background: linear-gradient(#cfe0f5, #c0d6f1);
  position: relative;
}

.coords {
  width: 298px;
  flex: none;
  font-family: "Open Sans", sans-serif;
  font-size: 16px;
  white-space: nowrap;
}

.unit {
  color: #2b5c92;
}

.xyz {
  color: #7c8ea5;
  margin-left: 7px;
}

.cell {
  width: 30px;
  flex: none;
  height: 28px;
  display: flex;
  align-items: center;
  justify-content: center;
  box-sizing: border-box;
}

.cell.on {
  width: 26px;
  margin: 0 2px;
  border: 1px solid #e5d5a6;
  border-radius: 2px;
  background: linear-gradient(#fdf3d6, #fbe7ad 55%, #f9d981);
}

.cell .ico {
  width: 24px;
  height: 24px;
}

.scale {
  width: 39px;
  flex: none;
  display: flex;
  align-items: center;
  gap: 3px;
  font-family: "Open Sans", sans-serif;
  color: #2b5c92;
}

.toggles {
  margin-left: auto;
  display: flex;
  gap: 5px;
  padding-right: 9px;
  color: #2b5c92;
}

.toggles span {
  width: 34px;
  white-space: nowrap;
  line-height: 28px;
}

.toggles span.on {
  width: 38px;
  box-sizing: border-box;
  padding: 0 2px;
  border: 1px solid #e5d5a6;
  border-radius: 2px;
  background: linear-gradient(#fdf3d6, #f9dc8c);
  color: #2d4a68;
}

.tray {
  width: 132px;
  height: 38px;
  flex: none;
  box-sizing: border-box;
  border-left: 1px solid #8aa3bf;
  background: #bbd2ec;
  display: flex;
  align-items: center;
  gap: 8px;
  padding-left: 10px;
}

.tray .ico {
  width: 22px;
  height: 22px;
}
</style>
